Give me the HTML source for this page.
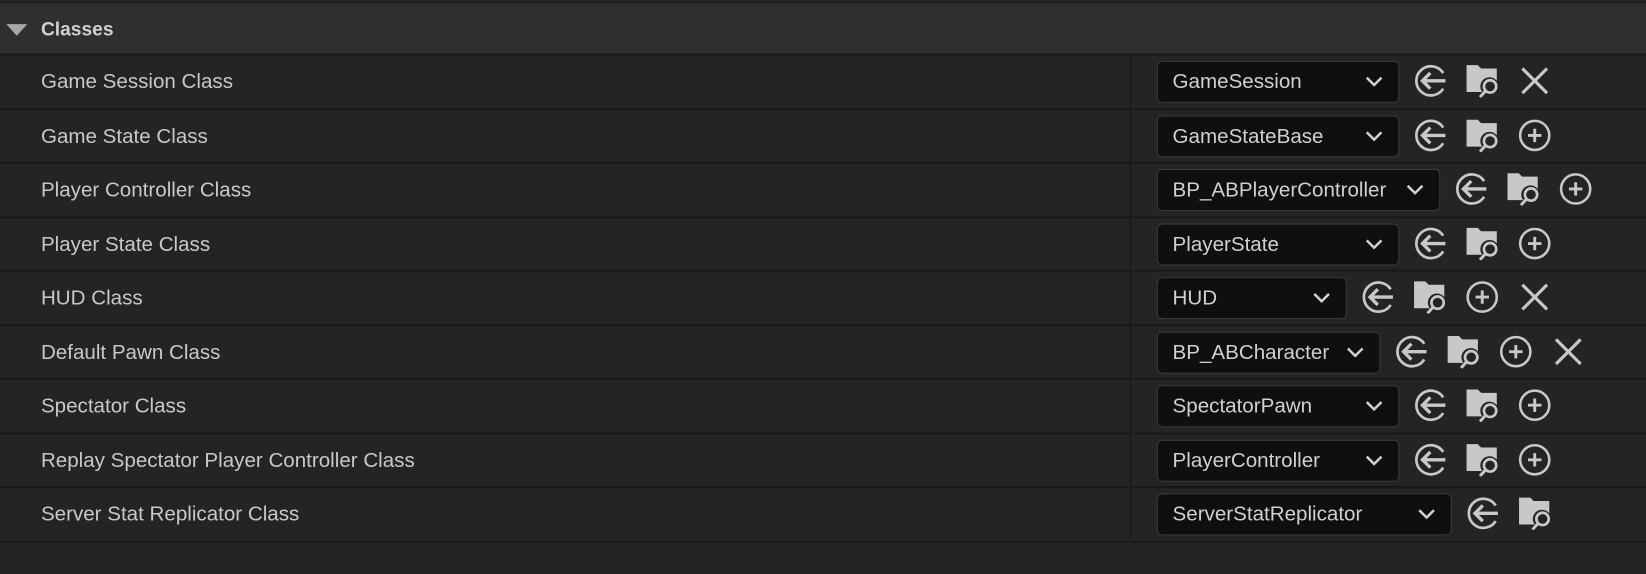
<!DOCTYPE html>
<html><head><meta charset="utf-8"><style>
html,body{margin:0;padding:0}
body{width:1646px;height:544px;background:#242424;font-family:"Liberation Sans",sans-serif;overflow:hidden;position:relative}
#w{position:absolute;left:0;top:0;width:1568px;height:519px;transform:scale(1.04974);transform-origin:0 0}
.hdr{position:absolute;left:0;top:2px;width:1568px;height:48px;background:#2f2f2f;border-top:1px solid #1c1c1c}
.hdr .t{position:absolute;left:39px;top:14px;font-size:18.3px;font-weight:bold;color:#d0d0d0}
.tri{position:absolute;left:6px;top:20px;width:0;height:0;border-left:10px solid transparent;border-right:10px solid transparent;border-top:11px solid #a8a8a8}
.row{position:absolute;left:0;width:1568px;height:49.5px;background:#242424;border-top:2px solid #1a1a1a}
.lbl{position:absolute;left:39px;top:14px;font-size:19.6px;color:#c8c8c8}
.div{position:absolute;left:1076px;top:0;width:2px;height:50px;background:#1c1c1c}
.dd{position:absolute;left:1102px;top:5px;height:40px;background:#0f0f0f;border:1px solid #3a3a3a;border-radius:5px;box-sizing:border-box}
.dd span{position:absolute;left:14px;top:8px;font-size:19.6px;color:#d0d0d0}
.dd svg{position:absolute;right:14px;top:13px}
.ic{position:absolute;top:8px}
.bot{position:absolute;left:0;top:515px;width:1568px;height:30px;background:#242424;border-top:2px solid #1a1a1a}
</style></head><body>
<svg width="0" height="0" style="position:absolute">
<defs>
<symbol id="ar" viewBox="0 0 30 30"><path d="M27 8A13 13 0 1 0 27 22" fill="none" stroke="#c8c8c8" stroke-width="2.4"/><path d="M29 15H9M15.5 8L8.5 15L15.5 22" fill="none" stroke="#c8c8c8" stroke-width="3"/></symbol>
<symbol id="fo" viewBox="0 0 30 30"><path d="M1 1H11L14 4H28V15A8 8 0 0 0 15 25H1Z" fill="#c8c8c8"/><circle cx="22" cy="20" r="5.5" fill="none" stroke="#c8c8c8" stroke-width="2.4"/><path d="M18 24L13 29.5" stroke="#c8c8c8" stroke-width="2.6"/></symbol>
<symbol id="pl" viewBox="0 0 30 30"><circle cx="15" cy="15" r="13" fill="none" stroke="#c8c8c8" stroke-width="2.3"/><path d="M15 9V21M9 15H21" stroke="#c8c8c8" stroke-width="2.6"/></symbol>
<symbol id="xx" viewBox="0 0 30 30"><path d="M4 4L26 26M26 4L4 26" stroke="#c8c8c8" stroke-width="2.8"/></symbol>
<symbol id="ch" viewBox="0 0 18 12"><path d="M2 2L9 9L16 2" fill="none" stroke="#d0d0d0" stroke-width="2.4"/></symbol>
</defs></svg>
<div id="w">
<div class="hdr"><div class="tri"></div><div class="t">Classes</div></div>
<div id="rows"></div>
<div class="bot"></div>
</div>
<script>
var d=[["Game Session Class","GameSession",1333,"afx"],["Game State Class","GameStateBase",1333,"afp"],["Player Controller Class","BP_ABPlayerController",1372,"afp"],["Player State Class","PlayerState",1333,"afp"],["HUD Class","HUD",1283,"afpx"],["Default Pawn Class","BP_ABCharacter",1315,"afpx"],["Spectator Class","SpectatorPawn",1333,"afp"],["Replay Spectator Player Controller Class","PlayerController",1333,"afp"],["Server Stat Replicator Class","ServerStatReplicator",1383,"af"]];
var m={a:"ar",f:"fo",p:"pl",x:"xx"},h="";
d.forEach(function(r,i){var top=(51+i*51.55).toFixed(2);h+='<div class="row" style="top:'+top+'px"><div class="lbl">'+r[0]+'</div><div class="div"></div><div class="dd" style="width:'+(r[2]-1102)+'px"><span>'+r[1]+'</span><svg width="18" height="12"><use href="#ch"/></svg></div>';
for(var k=0;k<r[3].length;k++){var cx=r[2]+29+k*50;h+='<svg class="ic" style="left:'+(cx-16)+'px" width="32" height="32"><use href="#'+m[r[3][k]]+'"/></svg>';}
h+='</div>';});
document.getElementById("rows").innerHTML=h;
</script>
</body></html>
